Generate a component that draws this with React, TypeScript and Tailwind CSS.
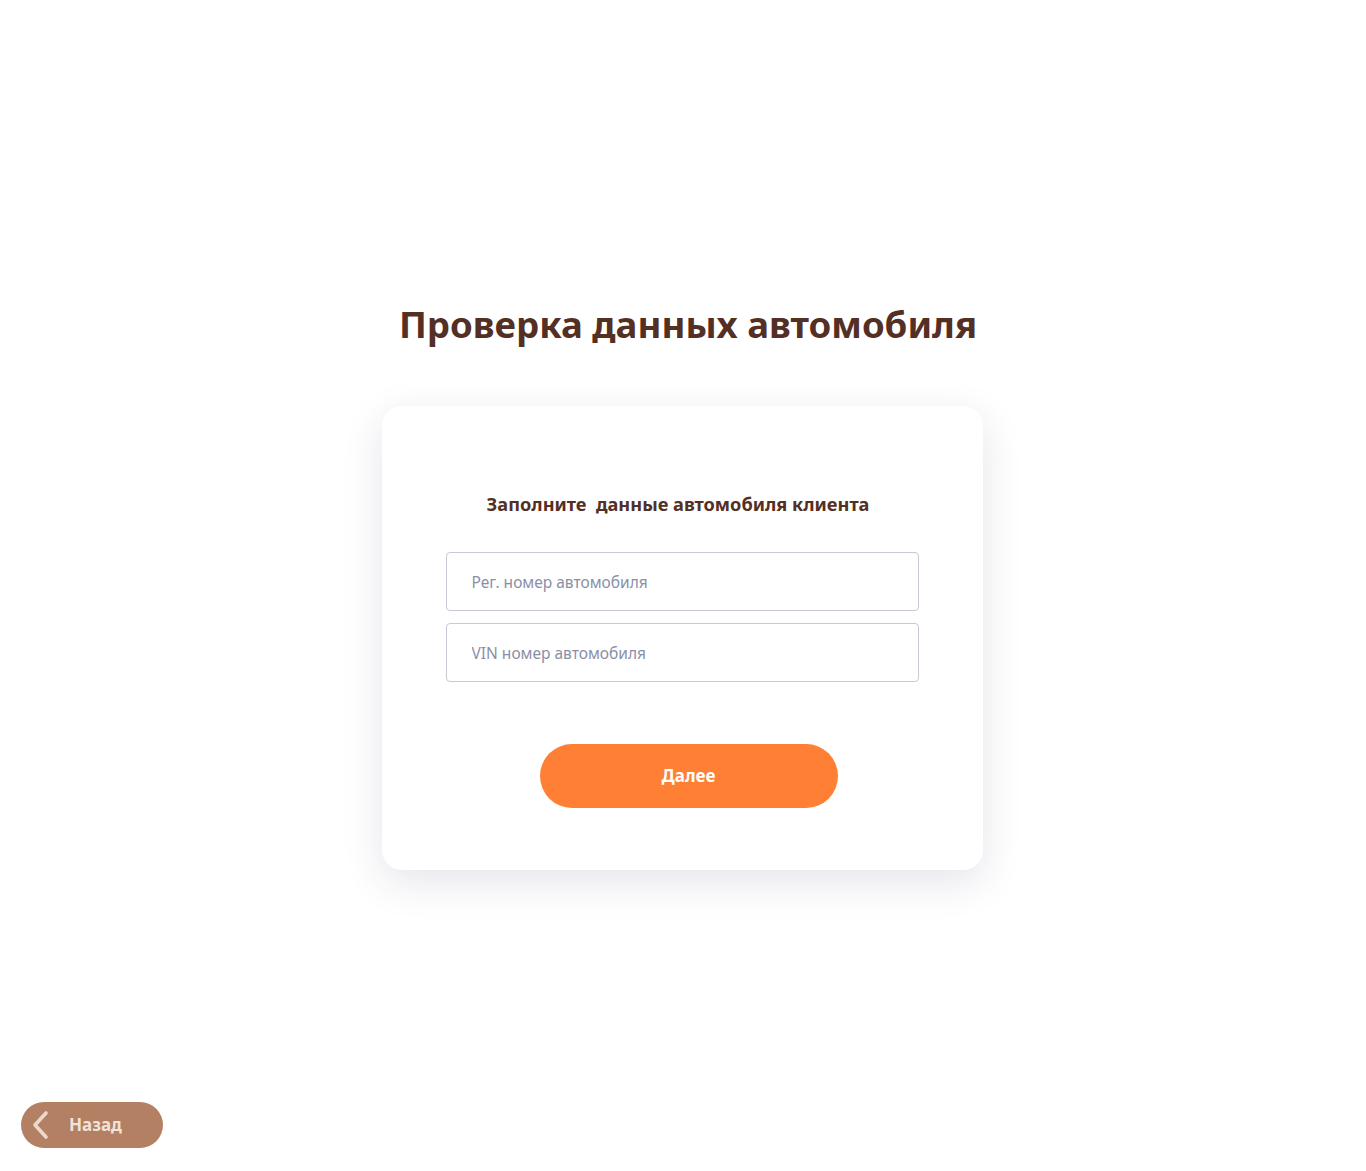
export default function App() {
  return (
    <div
      className="min-h-[1171px] bg-white flex flex-col"
      style={{ fontFamily: '"Noto Sans", "Open Sans", sans-serif' }}
    >
      <div className="flex-1 flex flex-col items-center pt-[298px]">
        <h1 className="text-[36.6px] leading-[52px] font-bold text-[#542f24] ml-[10px]">
          Проверка данных автомобиля
        </h1>

        <div className="mt-[56px] mr-[2px] w-[601px] h-[464px] bg-white rounded-[20px] shadow-[0_12px_40px_rgba(30,40,80,0.12)] flex flex-col items-center pt-[86px]">
          <h2 className="text-[18.2px] leading-[24px] font-bold text-[#542f24] ml-[-8px]">
            Заполните&nbsp; данные автомобиля клиента
          </h2>

          <div className="mt-[36px] w-[473px] flex flex-col gap-[12px]">
            <input
              type="text"
              placeholder="Рег. номер автомобиля"
              className="h-[59px] w-full border border-[#c9c9d6] rounded-[4px] px-[25px] text-[15.5px] text-[#3a3a4a] placeholder:text-[#8a8fa6] outline-none"
            />
            <input
              type="text"
              placeholder="VIN номер автомобиля"
              className="h-[59px] w-full border border-[#c9c9d6] rounded-[4px] px-[25px] text-[15.5px] text-[#3a3a4a] placeholder:text-[#8a8fa6] outline-none"
            />
          </div>

          <button className="mt-[62px] w-[298px] h-[64px] rounded-full bg-[#ff7f35] text-white text-[17px] font-bold ml-[13px]">
            Далее
          </button>
        </div>
      </div>

      <div className="pl-[21px] pb-[23px]">
        <button className="w-[142px] h-[46px] rounded-full bg-[#b38063] flex items-center pl-[11px]">
          <svg width="18" height="30" viewBox="0 0 18 30" fill="none">
            <polyline
              points="14,3 3,15 14,27"
              stroke="#ecd8cc"
              strokeWidth="3.6"
              strokeLinecap="round"
              strokeLinejoin="round"
            />
          </svg>
          <span className="ml-[19px] text-[17px] font-bold text-[#f1e2da]">Назад</span>
        </button>
      </div>
    </div>
  );
}
